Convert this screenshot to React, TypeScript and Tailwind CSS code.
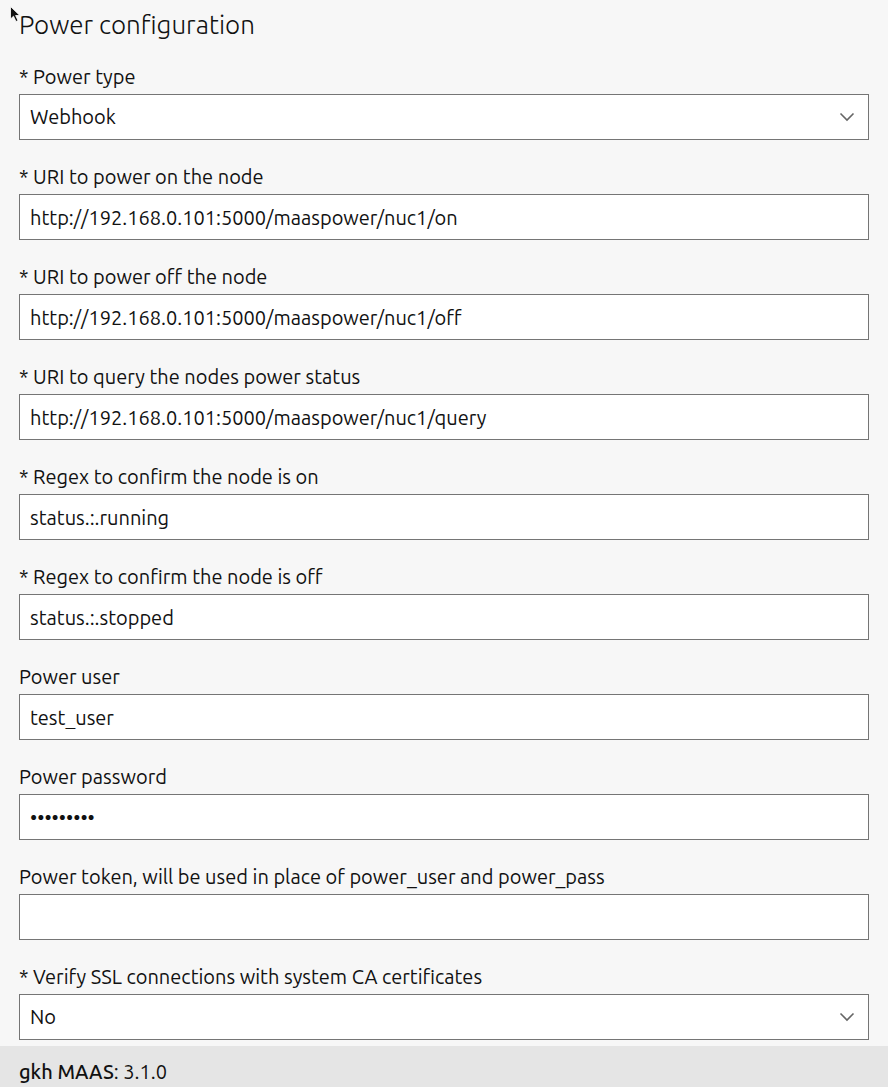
import type { ReactNode } from "react";

type Field =
  | { kind: "select"; label: string; value: string; required?: boolean }
  | { kind: "text" | "password"; label: string; value: string; required?: boolean };

const FIELDS: Field[] = [
  { kind: "select", label: "Power type", value: "Webhook", required: true },
  { kind: "text", label: "URI to power on the node", value: "http://192.168.0.101:5000/maaspower/nuc1/on", required: true },
  { kind: "text", label: "URI to power off the node", value: "http://192.168.0.101:5000/maaspower/nuc1/off", required: true },
  { kind: "text", label: "URI to query the nodes power status", value: "http://192.168.0.101:5000/maaspower/nuc1/query", required: true },
  { kind: "text", label: "Regex to confirm the node is on", value: "status.:.running", required: true },
  { kind: "text", label: "Regex to confirm the node is off", value: "status.:.stopped", required: true },
  { kind: "text", label: "Power user", value: "test_user" },
  { kind: "password", label: "Power password", value: "123456789" },
  { kind: "text", label: "Power token, will be used in place of power_user and power_pass", value: "" },
  { kind: "select", label: "Verify SSL connections with system CA certificates", value: "No", required: true },
];

const FONT = "font-['Ubuntu','Noto_Sans','Open_Sans',sans-serif]";

function Chevron() {
  return (
    <svg
      className="pointer-events-none absolute right-[13px] top-1/2 -translate-y-1/2"
      width="16"
      height="10"
      viewBox="0 0 16 10"
      fill="none"
    >
      <path d="M1.5 1.5 L8 8 L14.5 1.5" stroke="#666" strokeWidth="1.6" />
    </svg>
  );
}

function Row({ label, required, children }: { label: string; required?: boolean; children: ReactNode }) {
  return (
    <div className="mb-[25px]">
      <label className="mb-[5px] block text-[20px] leading-6 text-[#111]">
        {required && "* "}
        {label}
      </label>
      {children}
    </div>
  );
}

function Cursor() {
  return (
    <svg className="absolute left-[10px] top-[6px]" width="11" height="16" viewBox="0 0 11 16">
      <path d="M0.5 0.5 L0.5 13 L3.5 10.2 L6 15.5 L8 14.6 L5.6 9.5 L9.8 9.5 Z" fill="#111" stroke="#fff" strokeWidth="0.8" />
    </svg>
  );
}

export default function App() {
  return (
    <div className={`relative min-h-[1087px] w-[888px] bg-[#f7f7f7] ${FONT} text-[#111]`}>
      <Cursor />
      <div className="px-[19px] pt-[9px]">
        <h2 className="mb-6 text-[26px] font-light leading-8">Power configuration</h2>
        <form className="w-[850px]">
          {FIELDS.map((f) => (
            <Row key={f.label} label={f.label} required={f.required}>
              {f.kind === "select" ? (
                <div className="relative h-[46px] border border-[#757575] bg-white">
                  <select
                    defaultValue={f.value}
                    className="h-full w-full appearance-none bg-transparent px-[10px] text-[20px] text-[#111] outline-none"
                  >
                    <option>{f.value}</option>
                  </select>
                  <Chevron />
                </div>
              ) : (
                <input
                  type={f.kind}
                  readOnly
                  defaultValue={f.value}
                  className="block h-[46px] w-full border border-[#757575] bg-white px-[10px] text-[20px] text-[#111] outline-none"
                />
              )}
            </Row>
          ))}
        </form>
      </div>
      <footer className="-mt-[19px] h-[41px] bg-[#e5e5e5] px-[19px] pt-[14px] text-[20px] leading-6">
        <span className="font-medium">gkh MAAS</span>: 3.1.0
      </footer>
    </div>
  );
}
